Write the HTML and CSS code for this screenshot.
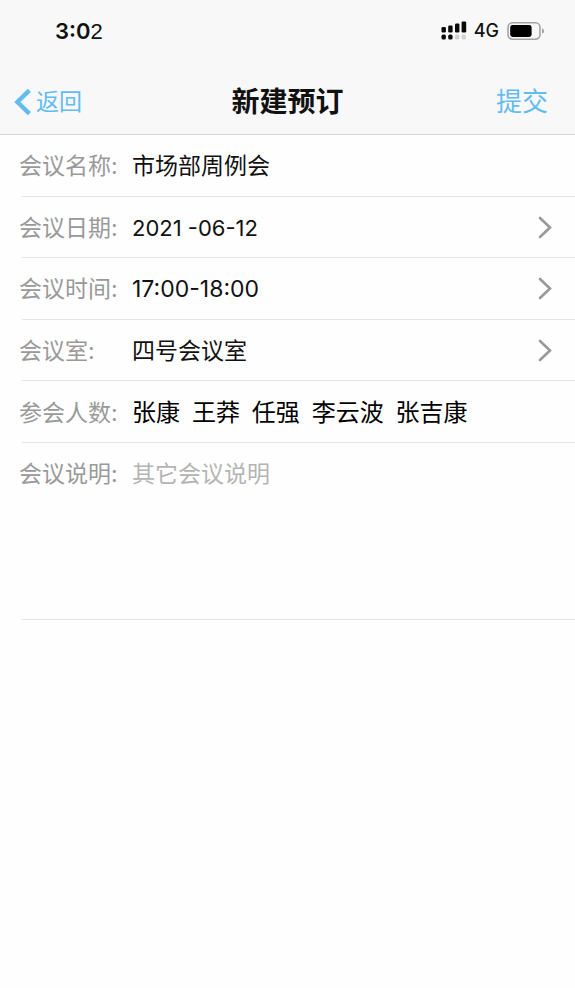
FILE: index.html
```html
<!DOCTYPE html>
<html lang="zh-CN">
<head>
<meta charset="utf-8">
<meta name="viewport" content="width=device-width, initial-scale=1">
<title>新建预订</title>
<link rel="stylesheet" href="styles.css">
</head>
<body>
<header class="top">
  <div class="status">
    <span class="clock">3:0<span class="clock-last">2</span></span>
    <div class="indicators">
      <svg class="signal" width="26" height="20" viewBox="0 0 26 20" aria-hidden="true">
        <g fill="#0a0a0a">
          <rect x="0.5" y="6" width="4.4" height="5.4" rx="1.2"/>
          <rect x="7.2" y="4.6" width="4.4" height="6.8" rx="1.2"/>
          <rect x="14" y="2.6" width="4.4" height="8.8" rx="1.2"/>
          <rect x="20.6" y="0.6" width="4.6" height="10.8" rx="1.2"/>
          <rect x="0.5" y="13.6" width="4.4" height="5" rx="1.6"/>
          <rect x="7.2" y="13.6" width="4.4" height="5" rx="1.6"/>
        </g>
        <g fill="#d2d2d2">
          <rect x="14" y="13.6" width="4.4" height="5" rx="1.6"/>
          <rect x="20.6" y="13.6" width="4.4" height="5" rx="1.6"/>
        </g>
      </svg>
      <span class="network">4G</span>
      <svg class="battery" width="38" height="20" viewBox="0 0 38 20" aria-hidden="true">
        <rect x="1" y="1.8" width="32" height="16.4" rx="4.6" fill="none" stroke="#a3a3a3" stroke-width="1.6"/>
        <rect x="3.2" y="4" width="21.4" height="12" rx="2.4" fill="#000"/>
        <path d="M35.2 7.2c2.2 1.2 2.2 4.4 0 5.6z" fill="#8f8f8f"/>
      </svg>
    </div>
  </div>
  <nav class="nav">
    <button class="back" type="button">
      <svg width="18" height="28" viewBox="0 0 18 28" aria-hidden="true"><path d="M15.4 2.4 3.4 14l12 11.6" fill="none" stroke="#62bcf2" stroke-width="4.4"/></svg>
      <span>返回</span>
    </button>
    <h1 class="title">新建预订</h1>
    <button class="submit" type="submit" form="booking">提交</button>
  </nav>
</header>
<form class="form" id="booking">
  <div class="rows">
    <div class="row">
      <label class="label" for="name">会议名称:</label>
      <input class="value" id="name" type="text" value="市场部周例会">
    </div>
    <div class="row">
      <label class="label" for="date">会议日期:</label>
      <button class="value picker date" id="date" type="button"><span>2021 -06-12</span>
        <svg class="chevron" width="14" height="24" viewBox="0 0 14 24" aria-hidden="true"><path d="M2 2 12 11.5 2 21"/></svg>
      </button>
    </div>
    <div class="row">
      <label class="label" for="time">会议时间:</label>
      <button class="value picker" id="time" type="button"><span>17:00-18:00</span>
        <svg class="chevron" width="14" height="24" viewBox="0 0 14 24" aria-hidden="true"><path d="M2 2 12 11.5 2 21"/></svg>
      </button>
    </div>
    <div class="row">
      <label class="label" for="room">会议室:</label>
      <button class="value picker" id="room" type="button"><span>四号会议室</span>
        <svg class="chevron" width="14" height="24" viewBox="0 0 14 24" aria-hidden="true"><path d="M2 2 12 11.5 2 21"/></svg>
      </button>
    </div>
    <div class="row">
      <label class="label" for="people">参会人数:</label>
      <input class="value people" id="people" type="text" value="张康  王莽  任强  李云波  张吉康">
    </div>
  </div>
  <div class="row note">
    <label class="label" for="note">会议说明:</label>
    <textarea class="value" id="note" placeholder="其它会议说明"></textarea>
  </div>
</form>
</body>
</html>
```
FILE: styles.css
```css
* {
  box-sizing: border-box;
}

body {
  margin: 0;
  background: #fefefe;
  color: #111;
  font-family: Inter, "Noto Sans CJK SC", sans-serif;
  font-size: 23px;
  line-height: 32px;
}

button,
input,
textarea {
  margin: 0;
  padding: 0;
  border: 0;
  background: none;
  font: inherit;
  color: inherit;
  outline: none;
}

.top {
  background: #f8f8f8;
  border-bottom: 1px solid #d6d6d6;
}

.status {
  display: flex;
  align-items: center;
  justify-content: space-between;
  height: 62px;
  padding: 0 30px 0 55px;
}

.clock {
  font-size: 22px;
  font-weight: 600;
}

.clock-last {
  font-family: "Liberation Sans", sans-serif;
  font-weight: 400;
}

.indicators {
  display: flex;
  align-items: center;
}

.network {
  margin: 0 8px 0 7px;
  font-size: 18px;
  font-weight: 500;
}

.nav {
  display: grid;
  grid-template-columns: 1fr auto 1fr;
  align-items: center;
  height: 72px;
  padding: 8px 14px 0;
  color: #62bcf2;
}

.back {
  display: flex;
  align-items: center;
  justify-self: start;
  gap: 4px;
}

.title {
  margin: 0;
  color: #111;
  font-size: 28px;
  font-weight: 700;
}

.submit {
  justify-self: end;
  margin-right: 13px;
  font-size: 26px;
}

.rows {
  display: grid;
  grid-template-rows: repeat(5, 1fr);
  min-height: 308px;
}

.row {
  display: flex;
  align-items: center;
  margin-left: 22px;
  padding-top: 2px;
  border-bottom: 1px solid #e4e4e4;
}

.label {
  flex: none;
  width: 113px;
  margin-left: -3px;
  color: #999;
}

.value {
  flex: 1;
  min-width: 0;
}

.picker {
  display: flex;
  align-items: center;
  justify-content: space-between;
  padding-right: 23px;
  text-align: left;
}

.date {
  font-size: 22px;
}

.chevron {
  fill: none;
  stroke: #999;
  stroke-width: 2.6;
  stroke-linecap: round;
}

.people {
  color: #000;
  font-family: Roboto, "Noto Sans CJK SC", sans-serif;
  font-size: 24px;
}

.note {
  align-items: flex-start;
  padding-top: 15px;
}

.note .value {
  height: 161px;
  resize: none;
}

.note .value::placeholder {
  color: #b4b4b4;
  opacity: 1;
}
```
